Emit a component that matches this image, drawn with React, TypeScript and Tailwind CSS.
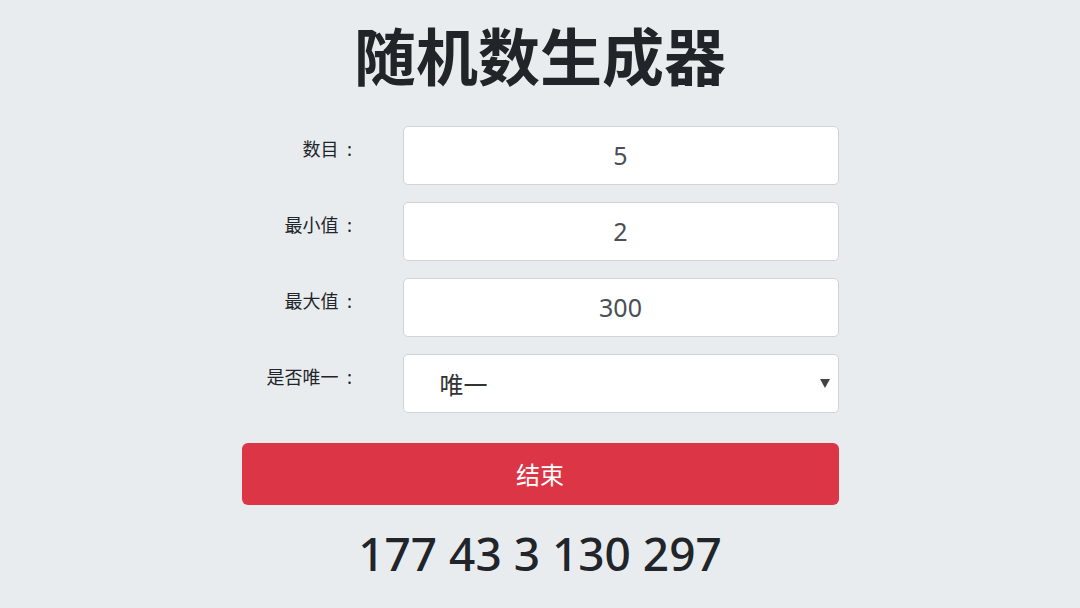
import React from "react";

const font = { fontFamily: '"Noto Sans", "Noto Sans CJK SC", sans-serif' };
const cjk = { fontFamily: '"Noto Sans CJK SC", "Noto Sans", sans-serif' };

function Row({ label, children }: { label: string; children: React.ReactNode }) {
  return (
    <div className="flex items-start">
      <div
        className="flex w-[161px] shrink-0 justify-end pr-[42px] pt-[9px] text-[18px] leading-[27px] text-[#212529]"
        style={cjk}
      >
        <span>{label}</span>
        <span className="inline-block w-[22px] text-center">:</span>
      </div>
      <div className="flex-1">{children}</div>
    </div>
  );
}

function Field({ value }: { value: string }) {
  return (
    <div className="flex h-[59px] items-center justify-center rounded-[5px] border border-[#ced4da] bg-white text-[25px] text-[#495057]">
      {value}
    </div>
  );
}

export default function App() {
  return (
    <div className="flex h-[608px] w-full justify-center bg-[#e9ecef]" style={font}>
      <div className="flex w-[597px] flex-col">
        <h1
          className="pt-[17px] text-center text-[62px] font-semibold leading-[74px] text-[#212529]"
          style={cjk}
        >
          随机数生成器
        </h1>
        <div className="mt-[35px] flex flex-col gap-[17px]">
          <Row label="数目">
            <Field value="5" />
          </Row>
          <Row label="最小值">
            <Field value="2" />
          </Row>
          <Row label="最大值">
            <Field value="300" />
          </Row>
          <Row label="是否唯一">
            <div
              className="relative flex h-[59px] items-center rounded-[5px] border border-[#ced4da] bg-white pl-[36px] text-[24px] text-[#333]"
              style={cjk}
            >
              唯一
              <svg
                className="absolute right-[8px] top-[24px]"
                width="10"
                height="9"
                viewBox="0 0 10 9"
              >
                <path d="M0 0 L10 0 L5 9 Z" fill="#444" />
              </svg>
            </div>
          </Row>
        </div>
        <button
          className="mt-[30px] h-[62px] w-full rounded-[6px] bg-[#dc3545] text-[24px] text-white"
          style={cjk}
        >
          结束
        </button>
        <div className="mt-[21px] text-center text-[46px] font-medium leading-[54px] text-[#212529]">
          177 43 3 130 297
        </div>
      </div>
    </div>
  );
}
